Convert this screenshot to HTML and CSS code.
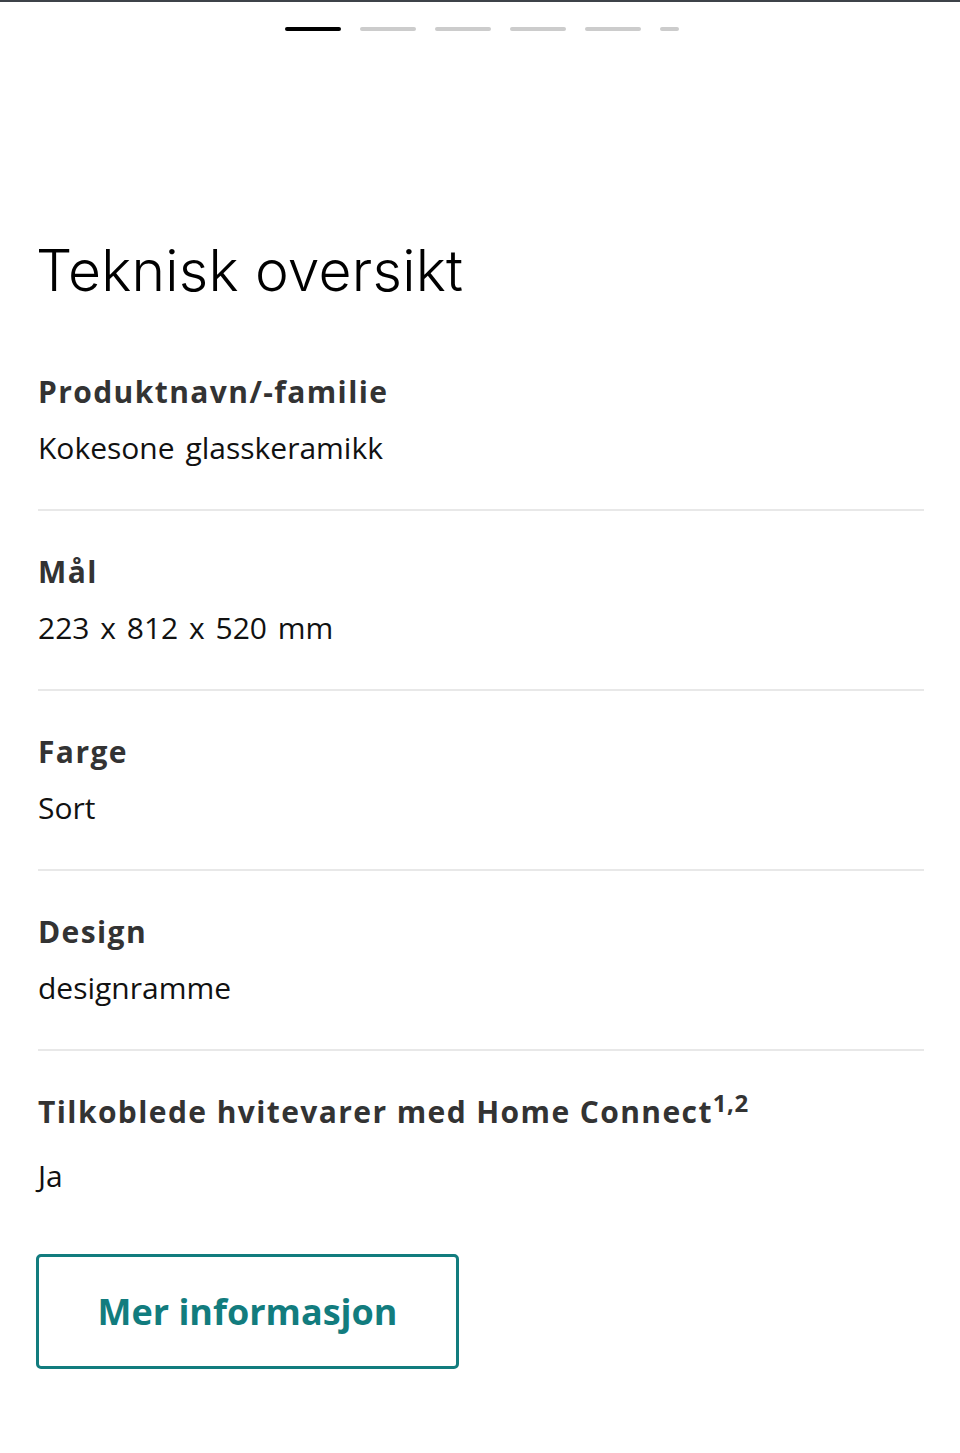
FILE: index.html
```html
<!DOCTYPE html>
<html lang="no">
<head>
<meta charset="utf-8">
<title>Teknisk oversikt</title>
<link rel="stylesheet" href="styles.css">
</head>
<body>
<div class="topline"></div>
<div class="pager">
  <span class="dash active"></span>
  <span class="dash"></span>
  <span class="dash"></span>
  <span class="dash"></span>
  <span class="dash"></span>
  <span class="dash short"></span>
</div>
<main class="content">
  <h1 class="title">Teknisk oversikt</h1>
  <dl class="specs">
    <div class="row">
      <dt class="label">Produktnavn/-familie</dt>
      <dd class="value">Kokesone glasskeramikk</dd>
    </div>
    <div class="row">
      <dt class="label">Mål</dt>
      <dd class="value">223 x 812 x 520 mm</dd>
    </div>
    <div class="row">
      <dt class="label">Farge</dt>
      <dd class="value">Sort</dd>
    </div>
    <div class="row">
      <dt class="label">Design</dt>
      <dd class="value">designramme</dd>
    </div>
    <div class="row last">
      <dt class="label">Tilkoblede hvitevarer med Home Connect<sup class="sup">1,2</sup></dt>
      <dd class="value">Ja</dd>
    </div>
  </dl>
  <button class="more" type="button">Mer informasjon</button>
</main>
</body>
</html>
```
FILE: styles.css
```css
html, body {
  margin: 0;
  padding: 0;
  background: #ffffff;
}
body {
  font-family: "Open Sans", "Noto Sans", sans-serif;
  color: #000;
}
.topline {
  height: 2px;
  background: #3d4349;
}
.pager {
  display: flex;
  justify-content: center;
  gap: 19px;
  padding-top: 25px;
  padding-left: 3px;
}
.dash {
  display: block;
  width: 56px;
  height: 4px;
  border-radius: 2px;
  background: #cccccc;
}
.dash.active {
  background: #000;
}
.dash.short {
  width: 19px;
}
.content {
  padding: 0 36px 0 38px;
}
.title {
  margin: 205px 0 25px -2px;
  font-family: "Inter", sans-serif;
  font-weight: 300;
  font-size: 57px;
  line-height: 70px;
  color: #000;
  letter-spacing: 0.2px;
}
.specs {
  margin: 0;
}
.row {
  padding: 41px 0;
  border-bottom: 2px solid #e8e8e8;
}
.row.last {
  border-bottom: 0;
  padding-bottom: 0;
}
.label {
  font-family: "Open Sans", sans-serif;
  font-weight: 700;
  font-size: 30px;
  line-height: 40px;
  letter-spacing: 1.4px;
  color: #333333;
}
.sup {
  font-size: 0.8em;
  line-height: 0;
  letter-spacing: 0.5px;
}
.value {
  margin: 16px 0 0;
  font-family: "Open Sans", sans-serif;
  font-weight: 400;
  font-size: 30px;
  line-height: 40px;
  word-spacing: 3px;
  color: #111;
}
.row.last .value {
  margin-top: 24px;
}
.more {
  display: flex;
  align-items: center;
  justify-content: center;
  box-sizing: border-box;
  margin-top: 58px;
  margin-left: -2px;
  width: 423px;
  height: 115px;
  border: 3px solid #127c7e;
  border-radius: 5px;
  background: #fff;
  color: #127c7e;
  font-family: "Open Sans", sans-serif;
  font-weight: 700;
  font-size: 36px;
  padding: 0;
}
```
